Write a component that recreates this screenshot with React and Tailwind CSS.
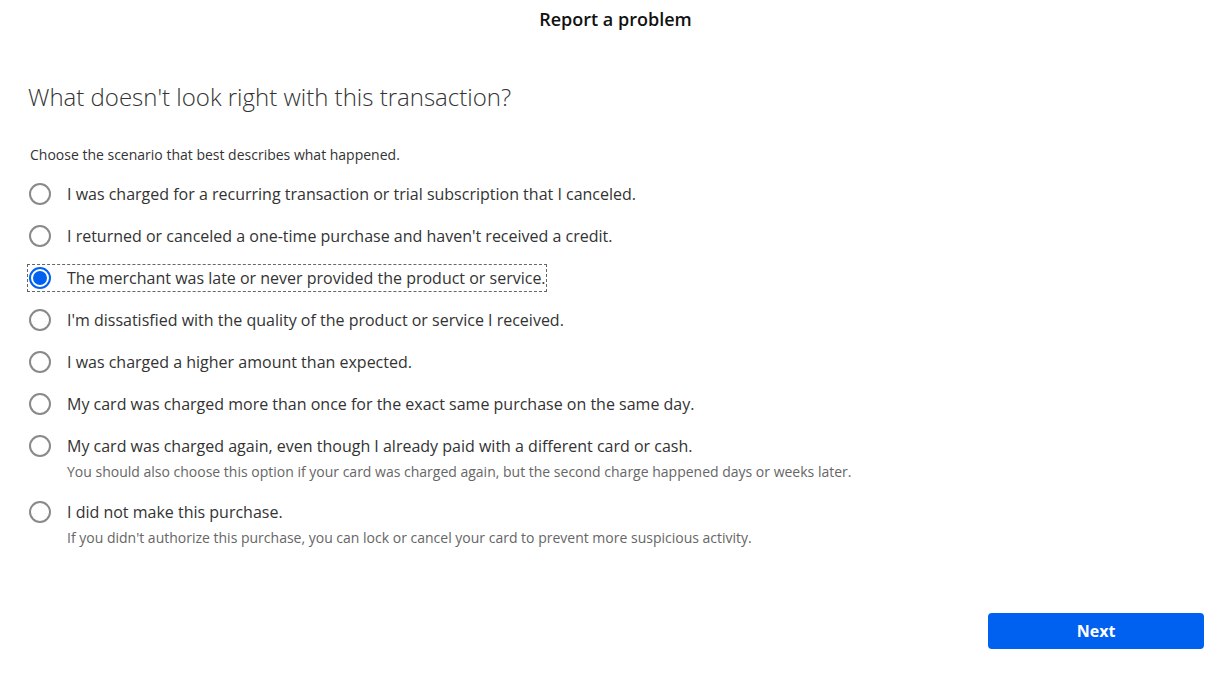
import React, { useState } from "react";

const options = [
  { id: "recurring", label: "I was charged for a recurring transaction or trial subscription that I canceled." },
  { id: "returned", label: "I returned or canceled a one-time purchase and haven't received a credit." },
  { id: "late", label: "The merchant was late or never provided the product or service." },
  { id: "quality", label: "I'm dissatisfied with the quality of the product or service I received." },
  { id: "higher", label: "I was charged a higher amount than expected." },
  { id: "duplicate", label: "My card was charged more than once for the exact same purchase on the same day." },
  {
    id: "paid",
    label: "My card was charged again, even though I already paid with a different card or cash.",
    hint: "You should also choose this option if your card was charged again, but the second charge happened days or weeks later.",
  },
  {
    id: "fraud",
    label: "I did not make this purchase.",
    hint: "If you didn't authorize this purchase, you can lock or cancel your card to prevent more suspicious activity.",
  },
];

const Radio = ({ checked }) => (
  <span
    className={
      checked
        ? "w-[22px] h-[22px] rounded-full border-2 border-[#0060f0] flex items-center justify-center shrink-0 bg-white"
        : "w-[22px] h-[22px] rounded-full border-2 border-[#8a8a8a] flex items-center justify-center shrink-0 bg-white"
    }
  >
    {checked && <span className="w-[14px] h-[14px] rounded-full bg-[#0060f0]"></span>}
  </span>
);

export default function App() {
  const [selected, setSelected] = useState("late");
  return (
    <div className="w-[1220px] h-[674px] bg-white text-[#333] flex flex-col font-['Open_Sans',sans-serif]">
      <h1 className="text-center text-[18px] font-semibold leading-6 text-[#111] mt-[7px] pl-[11px]">Report a problem</h1>
      <div className="pl-[28px] flex flex-col">
        <h2 className="text-[24px] font-light leading-8 mt-[50px] text-[#333]">
          What doesn't look right with this transaction?
        </h2>
        <p className="text-[14px] leading-5 mt-[32px] pl-[2px] text-[#333]">
          Choose the scenario that best describes what happened.
        </p>
        <div className="flex flex-col gap-4 mt-[16px]">
          {options.map((o) => (
            <div key={o.id} className="flex flex-col">
              <label
                onClick={() => setSelected(o.id)}
                className={
                  selected === o.id
                    ? "self-start flex items-center gap-4 h-[26px] outline-1 outline-dashed outline-[#666] cursor-pointer"
                    : "self-start flex items-center gap-4 h-[26px] cursor-pointer"
                }
              >
                <span className="pl-[1px]">
                  <Radio checked={selected === o.id} />
                </span>
                <span className="text-[16px] leading-[26px] text-[#333]">{o.label}</span>
              </label>
              {o.hint && (
                <p className="text-[14px] leading-5 mt-[3px] mb-[1px] pl-[39px] text-[#666]">{o.hint}</p>
              )}
            </div>
          ))}
        </div>
      </div>
      <div className="flex justify-end pr-[16px] mt-auto mb-[25px]">
        <button className="w-[216px] h-[36px] rounded bg-[#0060f0] text-white text-[16px] font-bold">Next</button>
      </div>
    </div>
  );
}
